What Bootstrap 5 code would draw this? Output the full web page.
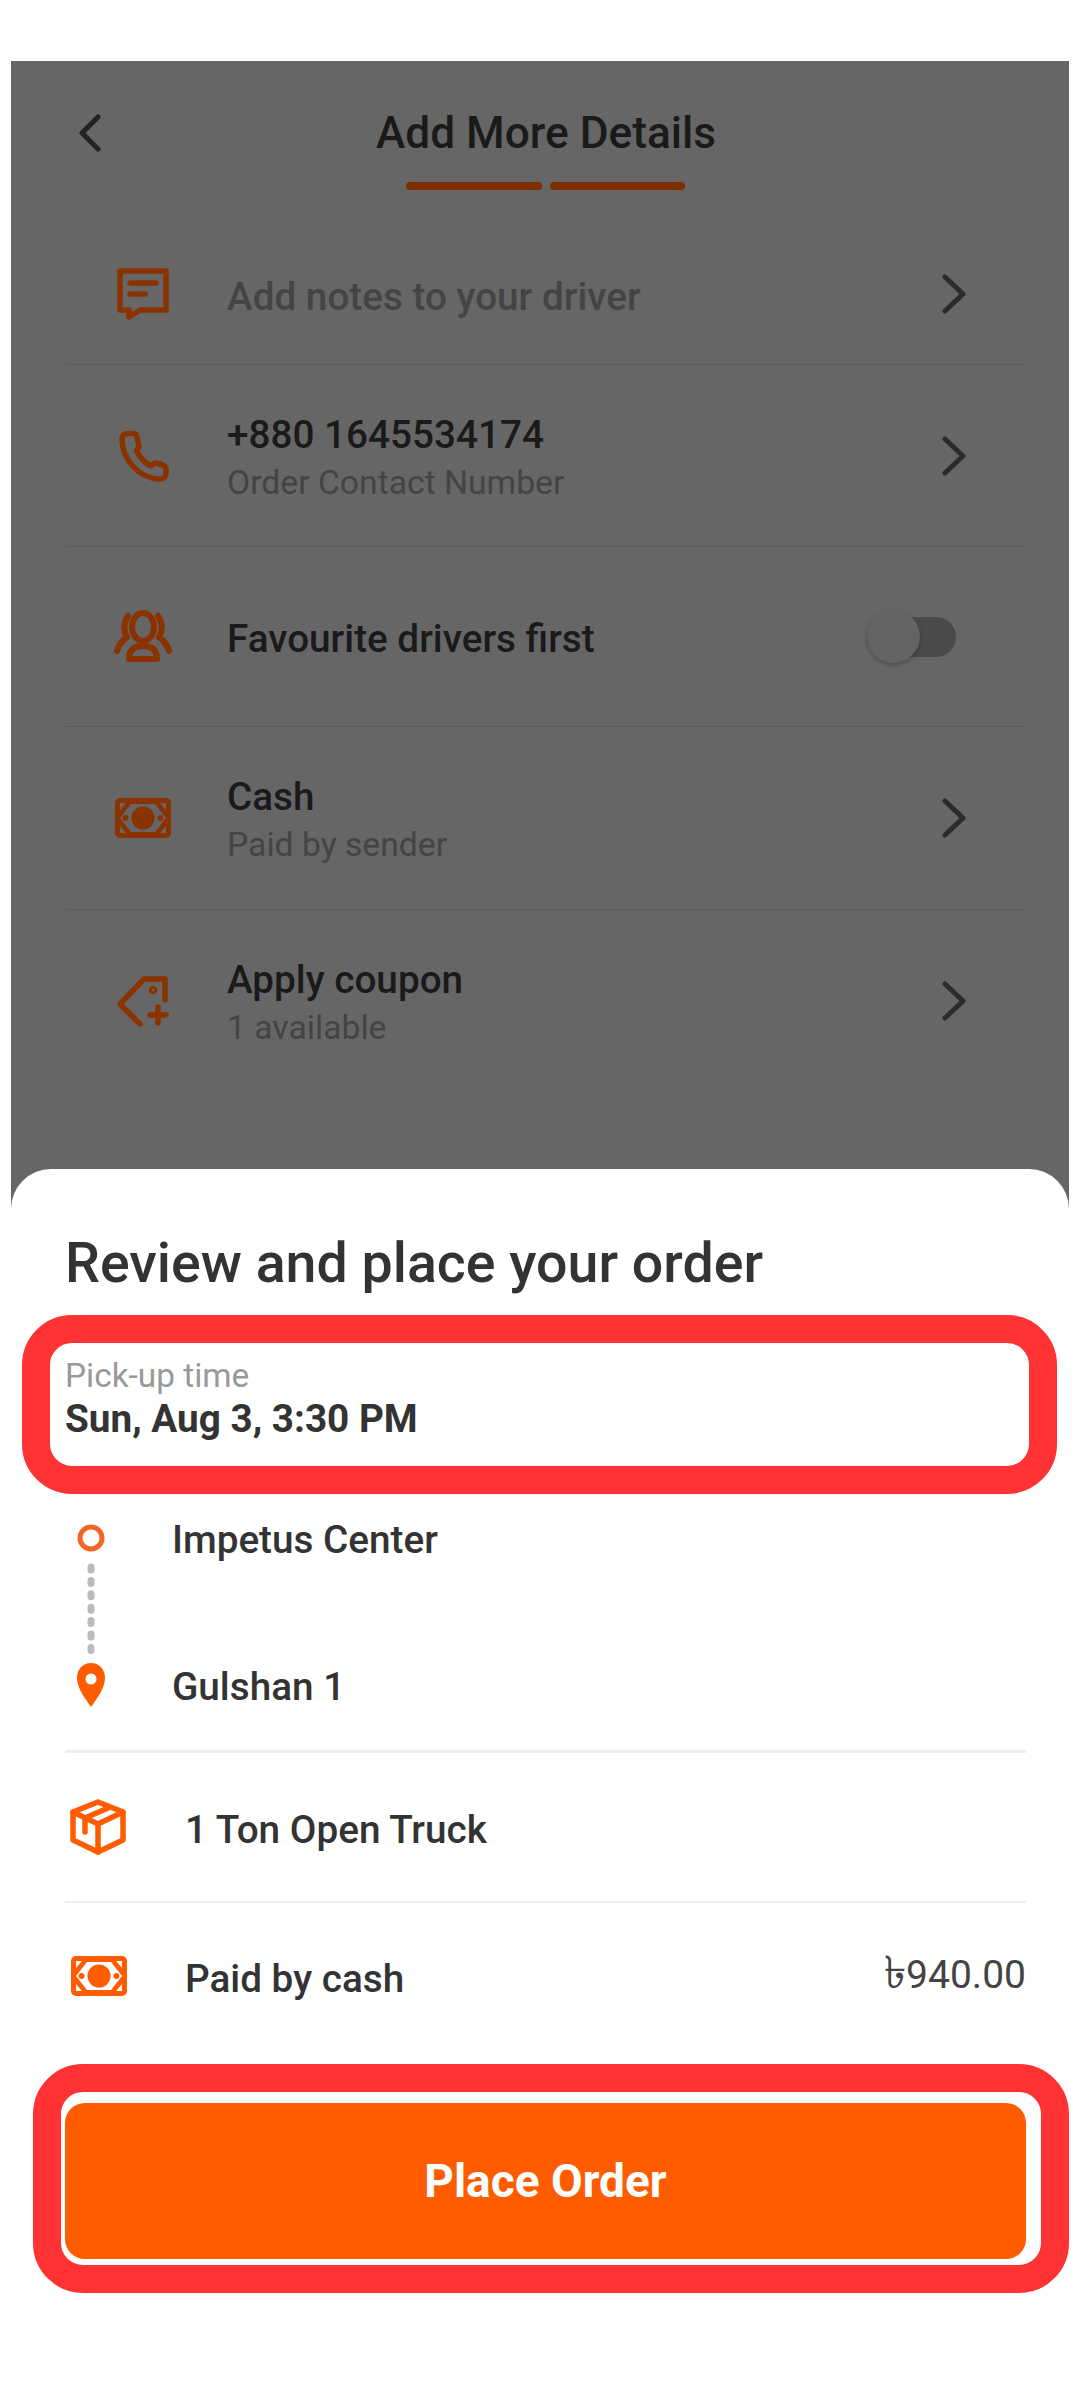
<!DOCTYPE html>
<html lang="en">
<head>
    <meta charset="UTF-8">
    <title>Add More Details</title>
    <meta name="viewport" content="width=device-width, initial-scale=1">
    <link href="https://cdn.jsdelivr.net/npm/bootstrap@5.3.2/dist/css/bootstrap.min.css" rel="stylesheet">
    <style>
        html, body { background: #fff; margin: 0; }
        body { font-family: Roboto, "Noto Sans", sans-serif; color: #333; }
        .page { position: relative; width: 1080px; height: 2400px; padding: 61px 11px 0; overflow: hidden; }

        .backdrop { height: 1149px; background: #666; }
        .top-head { display: grid; grid-template-columns: 1fr auto 1fr; align-items: center; padding: 46px 0 0 12px; }
        .top-head svg { margin-left: 56px; }
        .top-title { font-size: 44.2px; line-height: 52px; font-weight: 500; color: #1a1a1a; }
        .steps { width: 279px; margin: 23px 0 33px 395px; }
        .steps span { flex: 1; height: 8px; border-radius: 4px; background: #7f2e00; }

        .opt-list { margin: 0 43px 0 54px; }
        .opt-row { height: 182px; padding: 0; background: transparent; border-color: #5c5c5c; border-width: 0 0 2px; border-style: solid; }
        .opt-row.first { height: 142px; }
        .opt-row.mid { height: 180px; }
        .opt-row.mid .opt-text { padding-top: 4px; }
        .opt-row.tall { height: 183px; }
        .opt-row.last { border: 0; }
        .opt-icon { flex: 0 0 58px; margin: 0 55px 0 49px; }
        .opt-text { flex: 1; padding-top: 6px; }
        .opt-main { font-size: 38.7px; line-height: 48px; font-weight: 500; color: #1a1a1a; }
        .opt-main.hint { color: #444; }
        .opt-sub { font-size: 33.7px; line-height: 48px; color: #444; }
        .opt-arrow { margin-right: 60px; color: #2b2b2b; }

        .cash-dim { color: #8a3300; --cut: #666; }
        .cash-lit { color: #ff5c00; --cut: #fff; }

        .toggle { display: flex; align-items: center; width: 89px; height: 40px; margin-right: 70px; border-radius: 20px; background: #4a4a4a; }
        .toggle i { width: 53px; height: 53px; border-radius: 50%; background: #646464; box-shadow: 0 2px 4px rgba(0, 0, 0, .25); }

        .sheet { position: relative; margin-top: -41px; padding: 63px 43px 0 54px; background: #fff; border-radius: 40px 40px 0 0; }
        .sheet-title { font-size: 55.5px; line-height: 64px; font-weight: 500; color: #333; margin: 0 0 60px; }
        .pick-label { font-size: 33.4px; line-height: 40px; color: #999; }
        .pick-value { font-size: 38.7px; line-height: 44px; font-weight: 700; color: #333; margin: 1px 0 77px; }
        .route { padding-left: 11px; padding-bottom: 42px; border-bottom: 3px solid #eee; }
        .route svg { margin: 6px 66px 0 0; }
        .stops { height: 190px; }
        .stop { font-size: 38.7px; line-height: 42px; font-weight: 500; color: #333; padding-top: 1px; }
        .sum-row { height: 148px; padding-left: 5px; }
        .sum-row + .sum-row { border-top: 2px solid #eee; }
        .sum-row svg { margin-right: 57px; }
        .sum-name { font-size: 38.7px; line-height: 44px; font-weight: 500; color: #333; padding-top: 5px; }
        .sum-price { font-size: 39px; line-height: 44px; color: #444; margin-top: -3px; font-family: Roboto, "Noto Sans", "DejaVu Sans", sans-serif; }
        .taka { font-size: 45px; line-height: 40px; }

        .place-btn { display: block; width: 961px; height: 156px; margin-top: 54px; padding: 0; border: 0; border-radius: 20px; background: #ff5c00; color: #fff; font-size: 46px; font-weight: 700; }
        .place-btn:hover { background: #ff5c00; color: #fff; }

        .red-frame { position: absolute; border: 28px solid #f33; background: transparent; pointer-events: none; }
        .frame-time { left: 22px; top: 1315px; width: 1035px; height: 179px; border-radius: 50px; }
        .frame-btn { left: 33px; top: 2064px; width: 1036px; height: 229px; border-radius: 50px; }
    </style>
</head>

<body>

<svg width="0" height="0" class="d-block">
    <symbol id="cash" viewBox="0 0 56 40">
        <rect width="56" height="40" rx="5" fill="currentColor"/>
        <polygon points="5,20 16,6 40,6 51,20 40,34 16,34" fill="var(--cut)"/>
        <polygon points="5,5 11,5 5,12" fill="var(--cut)"/>
        <polygon points="51,5 45,5 51,12" fill="var(--cut)"/>
        <polygon points="5,35 11,35 5,28" fill="var(--cut)"/>
        <polygon points="51,35 45,35 51,28" fill="var(--cut)"/>
        <circle cx="28" cy="20" r="11.5" fill="currentColor"/>
        <circle cx="10.5" cy="20" r="3" fill="currentColor"/>
        <circle cx="45.5" cy="20" r="3" fill="currentColor"/>
    </symbol>
    <symbol id="chev" viewBox="0 0 24 40">
        <path d="M3 3 L21 20 L3 37" fill="none" stroke="currentColor" stroke-width="5" stroke-linecap="round" stroke-linejoin="round"/>
    </symbol>
</svg>

<div class="page">
    <div class="backdrop">
        <div class="top-head">
            <svg width="22" height="38" viewBox="0 0 22 38"><path d="M19 3 L3 19 L19 35" fill="none" stroke="#222" stroke-width="5" stroke-linecap="round" stroke-linejoin="round"/></svg>
            <div class="top-title">Add More Details</div>
            <div></div>
        </div>
        <div class="steps d-flex gap-2"><span></span><span></span></div>

        <ul class="opt-list list-group list-group-flush">
            <li class="opt-row first list-group-item d-flex align-items-center">
                <svg class="opt-icon" width="58" height="54" viewBox="0 0 58 54" fill="none" stroke="#8a3300" stroke-width="5.5" stroke-linejoin="round" stroke-linecap="round">
                    <path d="M6 4 H52 V43 H26 L15 50 V43 H6 Z"/>
                    <path d="M16 16 H42 M16 27 H31"/>
                </svg>
                <div class="opt-text"><div class="opt-main hint">Add notes to your driver</div></div>
                <svg class="opt-arrow" width="24" height="40"><use href="#chev"/></svg>
            </li>
            <li class="opt-row list-group-item d-flex align-items-center">
                <svg class="opt-icon" width="58" height="54" viewBox="0 0 58 54" fill="none" stroke="#8a3300" stroke-width="5.5" stroke-linejoin="round">
                    <path d="M8 10 C8 6 11 4.5 14 4.5 H20 C22 4.5 23 6 23 8 L25 17 C25 19 24 20 22.5 21.5 C26 29 31 34 37 37 C39 35 40 34 42 34 L49 36 C52 37 52 39 52 41 L52 45 C52 48 49 50 46 50 C25 50 8 30 8 10 Z"/>
                </svg>
                <div class="opt-text">
                    <div class="opt-main">+880 1645534174</div>
                    <div class="opt-sub">Order Contact Number</div>
                </div>
                <svg class="opt-arrow" width="24" height="40"><use href="#chev"/></svg>
            </li>
            <li class="opt-row mid list-group-item d-flex align-items-center">
                <svg class="opt-icon" width="58" height="54" viewBox="0 0 58 54" fill="none" stroke="#8a3300" stroke-width="6" stroke-linejoin="round" stroke-linecap="round">
                    <ellipse cx="29" cy="17" rx="11" ry="14"/>
                    <path d="M15 49 Q15 36 29 36 Q43 36 43 49 Z"/>
                    <path d="M14 6 Q7 16 13 27 Q5 33 3 41 M44 6 Q51 16 45 27 Q53 33 55 41"/>
                </svg>
                <div class="opt-text"><div class="opt-main">Favourite drivers first</div></div>
                <div class="toggle"><i></i></div>
            </li>
            <li class="opt-row tall list-group-item d-flex align-items-center">
                <svg class="opt-icon cash-dim" width="58" height="40"><use href="#cash"/></svg>
                <div class="opt-text">
                    <div class="opt-main">Cash</div>
                    <div class="opt-sub">Paid by sender</div>
                </div>
                <svg class="opt-arrow" width="24" height="40"><use href="#chev"/></svg>
            </li>
            <li class="opt-row last list-group-item d-flex align-items-center">
                <svg class="opt-icon" width="58" height="54" viewBox="0 0 58 54" fill="none" stroke="#8a3300" stroke-width="5.5" stroke-linejoin="round" stroke-linecap="round">
                    <path d="M51 26 V5 H30 L6 30 L26 50"/>
                    <circle cx="39" cy="16" r="1.5"/>
                    <path d="M44 33 V49 M36 41 H52"/>
                </svg>
                <div class="opt-text">
                    <div class="opt-main">Apply coupon</div>
                    <div class="opt-sub">1 available</div>
                </div>
                <svg class="opt-arrow" width="24" height="40"><use href="#chev"/></svg>
            </li>
        </ul>
    </div>

    <div class="sheet">
        <h2 class="sheet-title">Review and place your order</h2>
        <div class="pick-label">Pick-up time</div>
        <div class="pick-value">Sun, Aug 3, 3:30 PM</div>

        <div class="route d-flex">
            <svg width="30" height="184" viewBox="0 0 30 184">
                <circle cx="15" cy="14" r="11" fill="#fff" stroke="#f26522" stroke-width="5"/>
                <path d="M15 43 V133" stroke="#bbb" stroke-width="7" stroke-linecap="round" stroke-dasharray="3 10.4" fill="none"/>
                <path d="M15 139 C6 139 1 146 1 154 C1 165 11 177 15 183 C19 177 29 165 29 154 C29 146 24 139 15 139 Z" fill="#ff5c00"/>
                <circle cx="15" cy="155" r="5.5" fill="#fff"/>
            </svg>
            <div class="stops d-flex flex-column justify-content-between">
                <div class="stop">Impetus Center</div>
                <div class="stop">Gulshan 1</div>
            </div>
        </div>

        <div class="sum-row d-flex align-items-center">
            <svg width="58" height="58" viewBox="0 0 58 58" fill="none" stroke="#ff5c00" stroke-width="5.5" stroke-linejoin="round" stroke-linecap="round">
                <path d="M28 4 L53 14 V42 L28 54 L3 42 V14 Z"/>
                <path d="M3 14 L28 26 L53 14 M28 26 V54"/>
                <path d="M15 34 V20 L38 10"/>
            </svg>
            <div class="sum-name">1 Ton Open Truck</div>
        </div>
        <div class="sum-row d-flex align-items-center">
            <svg class="cash-lit" width="58" height="40"><use href="#cash"/></svg>
            <div class="sum-name flex-grow-1">Paid by cash</div>
            <div class="sum-price"><span class="taka">৳</span>940.00</div>
        </div>

        <button class="place-btn btn" type="button">Place Order</button>
    </div>

    <div class="red-frame frame-time"></div>
    <div class="red-frame frame-btn"></div>
</div>

<script src="https://cdn.jsdelivr.net/npm/bootstrap@5.3.2/dist/js/bootstrap.bundle.min.js"></script>
</body>
</html>
